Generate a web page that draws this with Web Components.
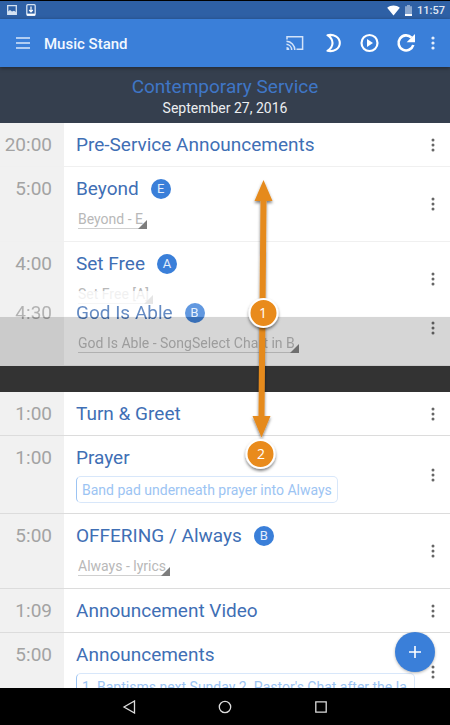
<!DOCTYPE html>
<html lang="en">
<head>
<meta charset="utf-8">
<meta name="viewport" content="width=device-width, initial-scale=1">
<title>Music Stand</title>
<style>
  html, body {
    height: 100%;
  }

  body {
    margin: 0;
    overflow: hidden;
    background: #000;
    font-family: Roboto, "Liberation Sans", sans-serif;
  }
</style>
</head>
<body>
<music-stand>
  <status-bar slot="top" time="11:57"></status-bar>
  <app-bar slot="top">Music Stand</app-bar>
  <plan-header slot="top" date="September 27, 2016">Contemporary Service</plan-header>

  <plan-item time="20:00" name="Pre-Service Announcements" faint></plan-item>
  <plan-item time="5:00" name="Beyond" key="E" faint>
    <chart-select value="Beyond - E"></chart-select>
  </plan-item>
  <plan-item time="4:00" name="Set Free" key="A" faint>
    <chart-select value="Set Free [A]"></chart-select>
  </plan-item>
  <drop-gap>
    <plan-item time="4:30" name="God Is Able" key="B" faint>
      <chart-select value="God Is Able - SongSelect Chart in B"></chart-select>
    </plan-item>
  </drop-gap>
  <plan-item time="1:00" name="Turn &amp; Greet"></plan-item>
  <plan-item time="1:00" name="Prayer">
    <item-note>Band pad underneath prayer into Always</item-note>
  </plan-item>
  <plan-item time="5:00" name="OFFERING / Always" key="B">
    <chart-select value="Always - lyrics"></chart-select>
  </plan-item>
  <plan-item time="1:09" name="Announcement Video"></plan-item>
  <plan-item time="5:00" name="Announcements">
    <item-note>1. Baptisms next Sunday 2. Pastor's Chat after the la...</item-note>
  </plan-item>

  <drag-guide slot="over"></drag-guide>
  <add-button slot="over"></add-button>
  <nav-bar slot="bottom"></nav-bar>
</music-stand>

<script>
/**
 * html is a template tag used to construct a <template>.
 */
function html(strings) {
  const template = document.createElement("template");
  template.innerHTML = String.raw(strings);
  return template;
}

class BaseElement extends HTMLElement {
  constructor() {
    super();
    this.attachShadow({ mode: "open" }).appendChild(
      this.constructor.template.content.cloneNode(true)
    );
  }

  $(selector) {
    return this.shadowRoot.querySelector(selector);
  }
}

class MusicStand extends BaseElement {
  static template = html`
    <slot name="top"></slot>
    <main>
      <div class="list"><slot></slot></div>
      <slot name="over"></slot>
    </main>
    <slot name="bottom"></slot>
    <style>
      :host {
        display: flex;
        flex-direction: column;
        height: 100vh;
      }

      main {
        position: relative;
        flex: 1;
        min-height: 0;
        overflow: hidden;
        background: #333;
      }

      .list {
        display: flex;
        flex-direction: column;
      }
    </style>
  `;
}

class StatusBar extends BaseElement {
  static template = html`
    <svg width="10" height="10" viewBox="0 0 10 10">
      <path d="M.7 .7h8.6v8.6H.7z" fill="none" stroke="#d5e2f2" stroke-width="1.3"/>
      <path d="M1 9V6.500l2-1.500 2 1.500 2-.8 2 1.300v2z" fill="#d5e2f2"/>
    </svg>
    <svg width="10" height="12" viewBox="0 0 10 12">
      <rect x=".8" y=".7" width="8.400" height="10.600" rx="1" fill="none" stroke="#d5e2f2" stroke-width="1.300"/>
      <path d="M1 9.600h8v2H1z" fill="#fff"/>
      <path d="M5 2.500v5M3.200 6 5 7.800 6.800 6" fill="none" stroke="#fff" stroke-width="1.200"/>
    </svg>
    <span class="space"></span>
    <svg width="13" height="11" viewBox="0 0 13 11">
      <path d="M6.500 10.600.2 2.800C2 1.200 4.100.4 6.500.4s4.500.8 6.300 2.400z" fill="#fff"/>
    </svg>
    <svg width="7" height="11" viewBox="0 0 7 11">
      <path d="M0 1.200h2V0h3v1.200h2V11H0z" fill="#8ba8d0"/>
      <path d="M0 9h7v2H0z" fill="#fff"/>
    </svg>
    <time></time>
    <style>
      :host {
        display: flex;
        align-items: center;
        gap: 5px;
        height: 18px;
        padding: 0 5px 0 7px;
        border-top: 1px solid #000;
        background: #2e60a5;
        color: #e0e8f4;
      }

      svg:first-child {
        margin-right: 4px;
      }

      .space {
        flex: 1;
      }

      time {
        font-size: 11px;
        font-weight: 500;
      }
    </style>
  `;

  connectedCallback() {
    this.$("time").textContent = this.getAttribute("time");
  }
}

class AppBar extends BaseElement {
  static template = html`
    <button class="menu" aria-label="Menu">
      <svg width="14" height="12" viewBox="0 0 14 12">
        <path d="M0 1h14M0 6h14M0 11h14" stroke="#d9e7fa" stroke-width="1.300"/>
      </svg>
    </button>
    <h1><slot></slot></h1>
    <button aria-label="Cast">
      <svg width="18" height="16" viewBox="0 0 18 16">
        <g fill="none" stroke="#d3e3f9" stroke-width="1.500">
          <path d="M1 4.500V1.800h15.600v12.400H10.500"/>
          <path d="M.5 6.200a8.800 8.800 0 0 1 8.300 8.800M.5 9.300a5.700 5.700 0 0 1 5.200 5.700"/>
        </g>
        <path d="M.5 12a3 3 0 0 1 2.800 3H.5z" fill="#d3e3f9"/>
      </svg>
    </button>
    <button aria-label="Night mode">
      <svg width="20" height="20" viewBox="0 0 20 20">
        <path d="M5.500 2.200C11.500.8 17.800 4 17.800 10S11.500 19.200 5.500 17.800C12.200 13.500 12.200 6.500 5.500 2.200z" fill="none" stroke="#fff" stroke-width="2.100" stroke-linejoin="round"/>
      </svg>
    </button>
    <button aria-label="Play">
      <svg width="20" height="20" viewBox="0 0 20 20">
        <circle cx="10.500" cy="10" r="8" fill="none" stroke="#fff" stroke-width="2.200"/>
        <path d="M8 6v8l6-4z" fill="#fff"/>
      </svg>
    </button>
    <button aria-label="Refresh">
      <svg width="20" height="20" viewBox="0 0 20 20">
        <path d="M15.500 4.700A7.500 7.500 0 1 0 17.300 12" fill="none" stroke="#fff" stroke-width="2.600"/>
        <path d="M19 1v8.200h-8.400z" fill="#fff"/>
      </svg>
    </button>
    <button class="more" aria-label="More options">
      <svg width="4" height="14" viewBox="0 0 4 14">
        <g fill="#e6effc"><circle cx="2" cy="2" r="1.600"/><circle cx="2" cy="7" r="1.600"/><circle cx="2" cy="12" r="1.600"/></g>
      </svg>
    </button>
    <style>
      :host {
        position: relative;
        z-index: 1;
        display: flex;
        align-items: stretch;
        height: 48px;
        padding-right: 8px;
        background: #3a7fd9;
        box-shadow: 0 1px 4px rgba(0, 0, 0, 0.4);
        color: #f2f8ff;
      }

      h1 {
        flex: 1;
        margin: 0;
        font-size: 15px;
        font-weight: 500;
        line-height: 50px;
        white-space: nowrap;
      }

      button {
        display: flex;
        align-items: center;
        justify-content: center;
        width: 37px;
        padding: 0;
        border: 0;
        background: none;
      }

      .menu {
        width: 44px;
        padding-left: 2px;
      }

      .more {
        width: 18px;
      }
    </style>
  `;
}

class PlanHeader extends BaseElement {
  static template = html`
    <h2><slot></slot></h2>
    <p></p>
    <style>
      :host {
        display: block;
        height: 49px;
        padding-top: 7px;
        background: #353f4e;
        text-align: center;
      }

      h2,
      p {
        margin: 0;
        font-weight: 400;
      }

      h2 {
        color: #3f76c6;
        font-size: 19px;
        line-height: 26px;
      }

      p {
        color: #eceef1;
        font-size: 14px;
        line-height: 16px;
      }
    </style>
  `;

  connectedCallback() {
    this.$("p").textContent = this.getAttribute("date");
  }
}

class PlanItem extends BaseElement {
  static template = html`
    <div class="time"></div>
    <div class="content">
      <div class="heading">
        <h3></h3>
        <span class="key"></span>
      </div>
      <slot></slot>
    </div>
    <button aria-label="Item options">
      <svg width="4" height="14" viewBox="0 0 4 14">
        <g fill="#666"><circle cx="2" cy="2" r="1.500"/><circle cx="2" cy="7" r="1.500"/><circle cx="2" cy="12" r="1.500"/></g>
      </svg>
    </button>
    <style>
      :host {
        display: flex;
        border-bottom: 1px solid #dcdcdc;
        background: #fff;
      }

      :host([faint]) {
        border-bottom-color: #f0f0f0;
      }

      .time,
      .content {
        box-sizing: border-box;
        padding: 11px 0 10px;
        font-size: 19px;
        line-height: 22px;
      }

      .time {
        flex: none;
        width: 64px;
        padding-right: 12px;
        background: #f1f1f1;
        color: #a3a3a3;
        text-align: right;
      }

      .content {
        flex: 1;
        min-width: 0;
        padding-left: 12px;
      }

      .heading {
        display: flex;
        align-items: center;
        gap: 12px;
        height: 22px;
      }

      h3 {
        margin: 0;
        color: #3f6fb5;
        font-size: 19px;
        font-weight: 400;
        white-space: nowrap;
      }

      .key {
        width: 20px;
        border-radius: 50%;
        background: #3a7fd9;
        color: #e4eefb;
        font-size: 13px;
        line-height: 20px;
        text-align: center;
      }

      .key:empty {
        display: none;
      }

      button {
        display: flex;
        flex: none;
        align-items: center;
        justify-content: center;
        width: 35px;
        padding: 0;
        border: 0;
        background: none;
      }
    </style>
  `;

  connectedCallback() {
    this.$(".time").textContent = this.getAttribute("time");
    this.$("h3").textContent = this.getAttribute("name");
    this.$(".key").textContent = this.getAttribute("key") || "";
  }
}

class ChartSelect extends BaseElement {
  static template = html`
    <select aria-label="Chart"><option></option></select>
    <svg width="9" height="9" viewBox="0 0 9 9"><path d="M9 0v9H0z" fill="#7d7d7d"/></svg>
    <style>
      :host {
        display: flex;
        align-items: flex-end;
        width: fit-content;
        margin: 10px 0 2px 2px;
      }

      select {
        appearance: none;
        height: 19px;
        margin: 0;
        padding: 0 4px 0 0;
        border: 0;
        border-bottom: 1px solid #d0d0d0;
        border-radius: 0;
        background: none;
        color: #b8b8b8;
        font: 14px/18px Roboto, "Liberation Sans", sans-serif;
      }

      svg {
        margin-left: -9px;
        pointer-events: none;
      }
    </style>
  `;

  connectedCallback() {
    this.$("option").textContent = this.getAttribute("value");
  }
}

class ItemNote extends BaseElement {
  static template = html`
    <slot></slot>
    <style>
      :host {
        display: block;
        box-sizing: border-box;
        width: fit-content;
        max-width: 100%;
        height: 27px;
        margin-top: 7px;
        padding: 0 5px;
        overflow: hidden;
        border: 1px solid #d8e7fa;
        border-left-color: #9cc4f3;
        border-radius: 5px;
        color: #9cc4f3;
        font-size: 14px;
        line-height: 26px;
        white-space: nowrap;
      }
    </style>
  `;
}

/* The empty place of a row that is being dragged, with the row floating above it. */
class DropGap extends BaseElement {
  static template = html`
    <slot></slot>
    <style>
      :host {
        position: relative;
        display: block;
        height: 75px;
      }

      ::slotted(*) {
        position: absolute;
        top: -26px;
        right: 0;
        left: 0;
        opacity: 0.8;
      }
    </style>
  `;
}

class DragGuide extends BaseElement {
  static template = html`
    <svg width="40" height="300" viewBox="0 0 40 300">
      <defs>
        <filter id="shadow" x="-50%" y="-20%" width="200%" height="150%">
          <feDropShadow dx="0" dy="2" stdDeviation="1.500" flood-opacity=".5"/>
        </filter>
      </defs>
      <g fill="#e58a1f" filter="url(#shadow)">
        <path d="M20.500 7 29.500 28H23.500L21.500 243H27.500L18.500 264.500 9.500 243H15.500L17.500 28H11.500z"/>
      </g>
      <g fill="#e98b1a" stroke="#fff" stroke-width="2" filter="url(#shadow)">
        <circle cx="20.500" cy="140" r="14"/>
        <circle cx="17.500" cy="281" r="14"/>
      </g>
      <g fill="#fff" text-anchor="middle">
        <text x="20" y="145">1</text>
        <text x="18" y="286">2</text>
      </g>
    </svg>
    <style>
      :host {
        position: absolute;
        top: 50px;
        left: 243px;
        pointer-events: none;
      }

      svg {
        display: block;
      }

      text {
        font: 14px "Open Sans", sans-serif;
      }
    </style>
  `;
}

class AddButton extends BaseElement {
  static template = html`
    <button aria-label="Add item">
      <svg width="14" height="14" viewBox="0 0 14 14">
        <path d="M7 1v12M1 7h12" stroke="#fff" stroke-width="1.600"/>
      </svg>
    </button>
    <style>
      :host {
        position: absolute;
        right: 15px;
        bottom: 16px;
      }

      button {
        display: grid;
        place-items: center;
        width: 40px;
        height: 40px;
        padding: 0;
        border: 0;
        border-radius: 50%;
        background: #3a7fd9;
        box-shadow: 0 1px 3px rgba(0, 0, 0, 0.3);
      }
    </style>
  `;
}

class NavBar extends BaseElement {
  static template = html`
    <button aria-label="Back">
      <svg width="14" height="14" viewBox="0 0 14 14"><path d="M12.500 1v12L2 7z"/></svg>
    </button>
    <button aria-label="Home">
      <svg width="14" height="14" viewBox="0 0 14 14"><circle cx="7" cy="7" r="5.700"/></svg>
    </button>
    <button aria-label="Recent apps">
      <svg width="14" height="14" viewBox="0 0 14 14"><path d="M1.800 1.800h10.400v10.400H1.800z"/></svg>
    </button>
    <style>
      :host {
        display: flex;
        justify-content: center;
        gap: 48px;
        height: 37px;
        background: #000;
      }

      button {
        display: grid;
        place-items: center;
        width: 48px;
        padding: 0;
        border: 0;
        background: none;
      }

      svg {
        fill: none;
        stroke: #dcdcdc;
        stroke-width: 1.300;
      }
    </style>
  `;
}

customElements.define("music-stand", MusicStand);
customElements.define("status-bar", StatusBar);
customElements.define("app-bar", AppBar);
customElements.define("plan-header", PlanHeader);
customElements.define("plan-item", PlanItem);
customElements.define("chart-select", ChartSelect);
customElements.define("item-note", ItemNote);
customElements.define("drop-gap", DropGap);
customElements.define("drag-guide", DragGuide);
customElements.define("add-button", AddButton);
customElements.define("nav-bar", NavBar);
</script>
</body>
</html>
